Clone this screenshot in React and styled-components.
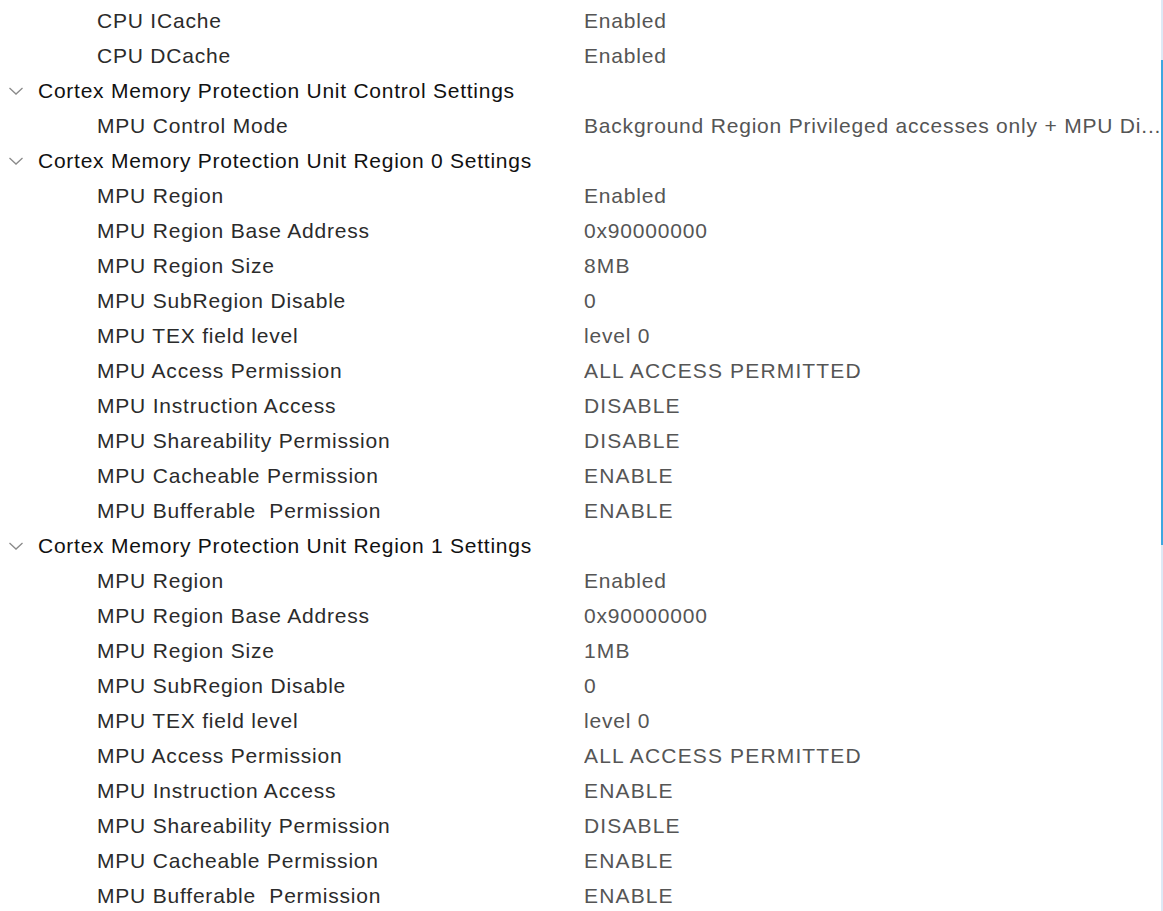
import React from 'react'
import styled, { createGlobalStyle } from 'styled-components'

const GlobalStyle = createGlobalStyle`
  html, body {
    margin: 0;
    padding: 0;
    background: #ffffff;
  }
  body {
    font-family: "Liberation Sans", Arial, sans-serif;
    overflow: hidden;
  }
`

const Pane = styled.div`
  position: relative;
  width: 1163px;
  height: 911px;
  overflow: hidden;
  background: #fff;
`

const Tree = styled.div`
  display: flex;
  flex-direction: column;
  padding-top: 3px;
`

const Row = styled.div`
  display: flex;
  align-items: center;
  height: 35px;
  font-size: 21px;
  white-space: pre;
`

const Toggle = styled.span`
  display: flex;
  align-items: center;
  justify-content: center;
  width: 16px;
  margin-left: 8px;
  margin-right: 14px;
`

const Title = styled.span`
  color: #111;
  letter-spacing: 0.75px;
`

const Name = styled.span`
  color: #2b2b2b;
  padding-left: 97px;
  width: 487px;
  flex-shrink: 0;
  letter-spacing: 0.8px;
`

const Value = styled.span`
  color: #555;
  overflow: hidden;
  width: 577px;
  letter-spacing: ${p => (p.$caps ? '1.15px' : '0.8px')};
`

const ScrollTrack = styled.div`
  position: absolute;
  top: 0;
  right: 0;
  width: 2px;
  height: 100%;
  background: #dde9f5;
`

const ScrollThumb = styled.div`
  position: absolute;
  top: 60px;
  left: 0;
  width: 2px;
  height: 485px;
  background: #3ea7e0;
`

const Chevron = () => (
  <svg width="16" height="10" viewBox="0 0 16 10">
    <path d="M1.5 2 L8 8 L14.5 2" fill="none" stroke="#8a8a8a" strokeWidth="1.3" />
  </svg>
)

const region = (size, instr) => [
  ['MPU Region', 'Enabled'],
  ['MPU Region Base Address', '0x90000000'],
  ['MPU Region Size', size],
  ['MPU SubRegion Disable', '0'],
  ['MPU TEX field level', 'level 0'],
  ['MPU Access Permission', 'ALL ACCESS PERMITTED'],
  ['MPU Instruction Access', instr],
  ['MPU Shareability Permission', 'DISABLE'],
  ['MPU Cacheable Permission', 'ENABLE'],
  ['MPU Bufferable  Permission', 'ENABLE'],
]

const sections = [
  { items: [['CPU ICache', 'Enabled'], ['CPU DCache', 'Enabled']] },
  {
    title: 'Cortex Memory Protection Unit Control Settings',
    items: [['MPU Control Mode', 'Background Region Privileged accesses only + MPU Di...']],
  },
  { title: 'Cortex Memory Protection Unit Region 0 Settings', items: region('8MB', 'DISABLE') },
  { title: 'Cortex Memory Protection Unit Region 1 Settings', items: region('1MB', 'ENABLE') },
]

export default function App() {
  return (
    <>
      <GlobalStyle />
      <Pane>
        <Tree>
          {sections.map((s, i) => (
            <React.Fragment key={i}>
              {s.title && (
                <Row>
                  <Toggle><Chevron /></Toggle>
                  <Title>{s.title}</Title>
                </Row>
              )}
              {s.items.map(([k, v]) => (
                <Row key={k}>
                  <Name>{k}</Name>
                  <Value $caps={v === v.toUpperCase()}>{v}</Value>
                </Row>
              ))}
            </React.Fragment>
          ))}
        </Tree>
        <ScrollTrack>
          <ScrollThumb />
        </ScrollTrack>
      </Pane>
    </>
  )
}
